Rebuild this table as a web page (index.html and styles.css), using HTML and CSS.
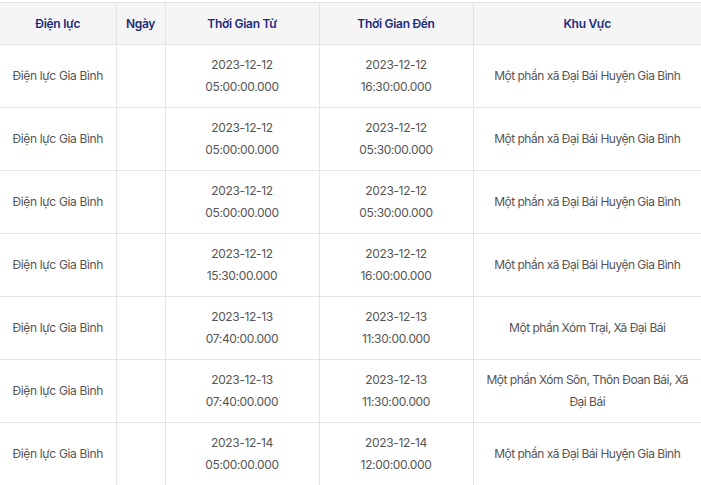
FILE: index.html
```html
<!DOCTYPE html>
<html lang="vi">
<head>
<meta charset="utf-8">
<link rel="stylesheet" href="styles.css">
</head>
<body>
<table class="outage">
  <colgroup>
    <col class="c1"><col class="c2"><col class="c3"><col class="c4"><col class="c5">
  </colgroup>
  <thead>
    <tr><th>Điện lực</th><th>Ngày</th><th>Thời Gian Từ</th><th>Thời Gian Đến</th><th>Khu Vực</th></tr>
  </thead>
  <tbody>
    <tr><td>Điện lực Gia Bình</td><td></td><td>2023-12-12<br>05:00:00.000</td><td>2023-12-12<br>16:30:00.000</td><td class="area">Một phần xã Đại Bái Huyện Gia Bình</td></tr>
    <tr><td>Điện lực Gia Bình</td><td></td><td>2023-12-12<br>05:00:00.000</td><td>2023-12-12<br>05:30:00.000</td><td class="area">Một phần xã Đại Bái Huyện Gia Bình</td></tr>
    <tr><td>Điện lực Gia Bình</td><td></td><td>2023-12-12<br>05:00:00.000</td><td>2023-12-12<br>05:30:00.000</td><td class="area">Một phần xã Đại Bái Huyện Gia Bình</td></tr>
    <tr><td>Điện lực Gia Bình</td><td></td><td>2023-12-12<br>15:30:00.000</td><td>2023-12-12<br>16:00:00.000</td><td class="area">Một phần xã Đại Bái Huyện Gia Bình</td></tr>
    <tr><td>Điện lực Gia Bình</td><td></td><td>2023-12-13<br>07:40:00.000</td><td>2023-12-13<br>11:30:00.000</td><td class="area">Một phần Xóm Trại, Xã Đại Bái</td></tr>
    <tr><td>Điện lực Gia Bình</td><td></td><td>2023-12-13<br>07:40:00.000</td><td>2023-12-13<br>11:30:00.000</td><td class="area">Một phần Xóm Sôn, Thôn Đoan Bái, Xã Đại Bái</td></tr>
    <tr><td>Điện lực Gia Bình</td><td></td><td>2023-12-14<br>05:00:00.000</td><td>2023-12-14<br>12:00:00.000</td><td class="area">Một phần xã Đại Bái Huyện Gia Bình</td></tr>
  </tbody>
</table>
</body>
</html>
```
FILE: styles.css
```css
html, body {
  margin: 0;
  padding: 0;
  background: #fff;
}
body {
  padding-top: 2px;
  font-family: Inter, "Noto Sans", sans-serif;
}
.outage {
  width: 701px;
  border-collapse: collapse;
  table-layout: fixed;
  font-size: 12px;
}
.c1 { width: 116px; }
.c2 { width: 49px; }
.c3 { width: 154px; }
.c4 { width: 154px; }
.c5 { width: 228px; }
.outage th,
.outage td {
  border: 1px solid #e4e4e4;
  text-align: center;
  vertical-align: middle;
}
.outage tr > :first-child { border-left: none; }
.outage tr > :last-child { border-right: none; }
.outage th {
  background: #f5f5f5;
  color: #1c2b7e;
  font-weight: 600;
  letter-spacing: -0.3px;
  height: 42px;
  padding: 0 8px;
  box-sizing: border-box;
}
.outage td {
  color: #555;
  line-height: 22px;
  padding: 9px 8px;
  height: 63px;
  box-sizing: border-box;
  letter-spacing: -0.35px;
}
.outage td.area {
  letter-spacing: -0.5px;
  padding: 9px 10px;
}
```
